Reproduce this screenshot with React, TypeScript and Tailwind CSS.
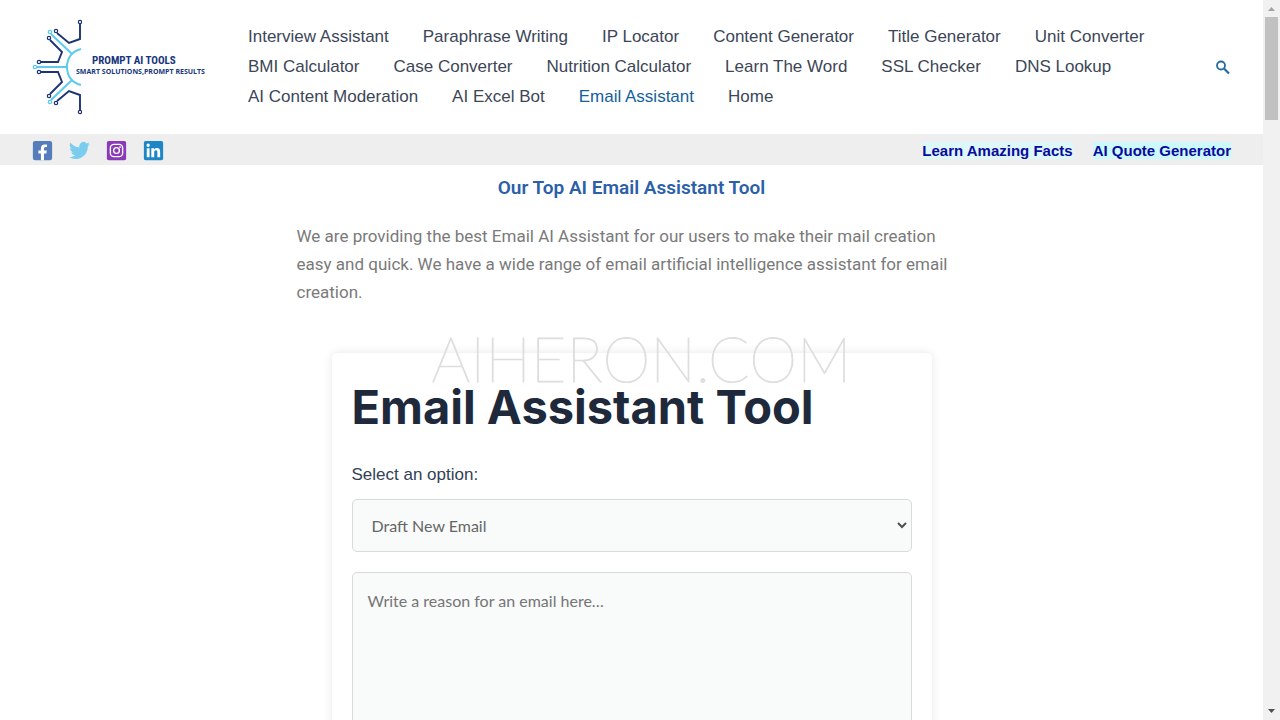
import type { ReactNode } from "react";

const links = [
  "Interview Assistant",
  "Paraphrase Writing",
  "IP Locator",
  "Content Generator",
  "Title Generator",
  "Unit Converter",
  "BMI Calculator",
  "Case Converter",
  "Nutrition Calculator",
  "Learn The Word",
  "SSL Checker",
  "DNS Lookup",
  "AI Content Moderation",
  "AI Excel Bot",
  "Email Assistant",
  "Home",
];

function CircuitMark() {
  return (
    <svg viewBox="0 0 50 98" className="h-[98px] w-[50px] shrink-0" fill="none" aria-hidden="true">
      <g stroke="#5ccbec" strokeWidth="2">
        <path d="M49 31C40 33 35 40 35 49s5 16 14 18M5 49h29M19 16l21 20M19 82l21-20" />
        <circle cx="3" cy="49" r="1.7" strokeWidth="1.300" />
        <circle cx="18" cy="14" r="1.700" strokeWidth="1.300" />
        <circle cx="18" cy="84" r="1.700" strokeWidth="1.300" />
      </g>
      <g stroke="#1c3474" strokeWidth="1.900">
        <path d="M48 6v15l-11 4L25 15M18 22l12 12-4 10H9M48 92V77l-11-4-12 10M18 76l12-12-4-10H9" />
        <g strokeWidth="1.200">
          <circle cx="48" cy="4" r="1.700" />
          <circle cx="24" cy="13" r="1.700" />
          <circle cx="17" cy="20" r="1.700" />
          <circle cx="7" cy="44" r="1.700" />
          <circle cx="7" cy="54" r="1.700" />
          <circle cx="17" cy="78" r="1.700" />
          <circle cx="24" cy="85" r="1.700" />
          <circle cx="48" cy="94" r="1.700" />
        </g>
      </g>
    </svg>
  );
}

function Logo() {
  return (
    <a href="#home" aria-label="Prompt AI Tools" className="flex w-[184px] shrink-0 items-center">
      <CircuitMark />
      <span className="-ml-1.5 flex flex-col pb-1 whitespace-nowrap text-[#17367c]">
        <span className="pl-4 font-['Liberation_Sans_Narrow','Roboto_Condensed',sans-serif] text-[11px] leading-[14px] font-bold">
          PROMPT AI TOOLS
        </span>
        <span className="font-['Open_Sans',sans-serif] text-[7px] leading-[8px] font-bold">
          SMART SOLUTIONS,PROMPT RESULTS
        </span>
      </span>
    </a>
  );
}

function Social({ label, color, children }: { label: string; color: string; children: ReactNode }) {
  return (
    <a href={"#" + label.toLowerCase()} aria-label={label} className={color}>
      <svg viewBox="0 0 24 24" className="size-[21px]" fill="currentColor" aria-hidden="true">
        {children}
      </svg>
    </a>
  );
}

function Scrollbar() {
  return (
    <div className="flex w-[17px] shrink-0 flex-col items-center bg-[#f1f1f1]" aria-hidden="true">
      <svg viewBox="0 0 17 17" className="size-[17px]">
        <path d="M5 11h7L8.500 7z" fill="#a3a3a3" />
      </svg>
      <div className="h-[103px] w-[13px] bg-[#c1c1c1]" />
      <svg viewBox="0 0 17 17" className="mt-auto size-[17px]">
        <path d="M5 6h7l-3.500 4z" fill="#505050" />
      </svg>
    </div>
  );
}

export default function App() {
  return (
    <div className="flex h-screen bg-white font-['Liberation_Sans',sans-serif] text-[#334155]">
      <div className="min-w-0 flex-1 overflow-hidden">
        <header className="flex items-center px-8 py-[18px]">
          <Logo />
          <nav aria-label="Main" className="ml-8 flex-1">
            <ul className="flex flex-wrap gap-x-[34px] py-1 text-[17px] leading-[30px]">
              {links.map((link) => (
                <li key={link}>
                  <a href="#page" className={link === "Email Assistant" ? "text-[#155f9c]" : "text-[#3c4657]"}>
                    {link}
                  </a>
                </li>
              ))}
            </ul>
          </nav>
          <button type="button" aria-label="Search" className="ml-12">
            <svg viewBox="0 0 18 18" className="size-[18px]" fill="none" stroke="#256aa8" aria-hidden="true">
              <circle cx="8" cy="7.500" r="4" strokeWidth="1.8" />
              <path d="M11 10.500l5 5" strokeWidth="2.200" />
            </svg>
          </button>
        </header>

        <div className="flex h-[31px] items-center justify-between bg-[#eeeeee] px-8">
          <div className="flex items-center gap-4 pt-0.5">
            <Social label="Facebook" color="text-[#557dbc]">
              <rect x="1" y="1" width="22" height="22" rx="2.500" />
              <path
                fill="#fff"
                d="M10.200 23v-7.600H7.300V12h2.900V9.500c0-2.900 1.700-4.500 4.300-4.500 1.300 0 2.600.2 2.600.2v2.900h-1.500c-1.400 0-1.900.9-1.900 1.800V12h3.200l-.5 3.400h-2.700V23z"
              />
            </Social>
            <Social label="Twitter" color="text-[#7acdee]">
              <path d="M24 4.600c-.9.4-1.800.7-2.800.8 1-.6 1.800-1.600 2.200-2.700-1 .6-2 1-3.100 1.200a4.900 4.900 0 0 0-8.400 4.500C7.700 8.100 4.100 6.100 1.700 3.100a4.900 4.900 0 0 0 1.500 6.600c-.8 0-1.600-.2-2.200-.6v.1c0 2.300 1.700 4.300 3.900 4.800-.7.200-1.400.2-2.200.1.600 2 2.400 3.400 4.600 3.400A9.900 9.900 0 0 1 0 19.500 13.900 13.900 0 0 0 7.500 21.700c9.100 0 14-7.500 14-14v-.6c1-.7 1.800-1.600 2.500-2.500z" />
            </Social>
            <Social label="Instagram" color="text-[#8a3ab9]">
              <rect x="1" y="1" width="22" height="22" rx="2" />
              <g fill="none" stroke="#fff" strokeWidth="1.600">
                <rect x="5" y="5" width="14" height="14" rx="4" />
                <circle cx="12" cy="12" r="3.300" />
              </g>
              <circle cx="16" cy="8" r="1" fill="#fff" />
            </Social>
            <Social label="LinkedIn" color="text-[#1c86c6]">
              <rect x="1" y="1" width="22" height="22" rx="2" />
              <path
                fill="#fff"
                d="M4.300 9.300h3.200v10.400H4.300zM5.900 4.100a1.900 1.900 0 1 1 0 3.800 1.900 1.900 0 0 1 0-3.800zM9.500 9.300h3.100v1.400c.5-.9 1.600-1.700 3.100-1.700 3.300 0 3.900 2.100 3.900 5v5.700h-3.200v-5.100c0-1.200 0-2.800-1.700-2.800s-1.900 1.300-1.900 2.700v5.200H9.500z"
              />
            </Social>
          </div>
          <div className="flex items-center gap-5 pt-0.5 text-[15px] leading-[17px] font-bold text-[#0a0a9c]">
            <a href="#facts" className="bg-[#dcf8fa]">Learn Amazing Facts</a>
            <a href="#quotes" className="bg-[#ccfafc]">AI Quote Generator</a>
          </div>
        </div>

        <main className="mx-auto flex w-full max-w-[670px] flex-col font-['Roboto',sans-serif]">
          <h1 className="mt-[9px] text-center text-[19px] leading-[28px] font-semibold text-[#2b5fa8]">
            Our Top AI Email Assistant Tool
          </h1>
          <p className="mt-5 text-[17px] leading-[28px] text-[#7a7a7a]">
            We are providing the best Email AI Assistant for our users to make their mail creation easy and quick.
            We have a wide range of email artificial intelligence assistant for email creation.
          </p>

          <section className="relative mx-auto mt-[47px] w-full max-w-[600px] rounded-[5px] bg-white p-5 shadow-[0_0_10px_rgba(0,0,0,0.1)]">
            <p className="pointer-events-none absolute -top-[31px] left-[100px] font-['Lato',sans-serif] text-[61px] leading-[74px] font-thin whitespace-nowrap text-[#dedede] [-webkit-text-stroke:1px_#dedede]">
              AIHERON.COM
            </p>
            <h2 className="relative font-['Inter',sans-serif] text-[47px] leading-[68px] font-bold whitespace-nowrap text-[#1e293b]">
              Email Assistant Tool
            </h2>
            <form onSubmit={(event) => event.preventDefault()}>
              <label
                htmlFor="mail-kind"
                className="mt-5 block font-['Liberation_Sans',sans-serif] text-[17px] leading-[28px] text-[#334155]"
              >
                Select an option:
              </label>
              <div className="relative mt-[10px]">
                <select
                  id="mail-kind"
                  className="h-[53px] w-full appearance-none rounded-[5px] border border-[#d8dadb] bg-[#f9fafa] px-[19px] font-['Lato',sans-serif] text-[16px] text-[#666666]"
                >
                  <option>Draft New Email</option>
                </select>
                <svg
                  viewBox="0 0 10 10"
                  className="pointer-events-none absolute top-[21px] right-[5px] size-[10px]"
                  fill="none"
                  stroke="#505050"
                  strokeWidth="2"
                  aria-hidden="true"
                >
                  <path d="M1 3l4 4 4-4" />
                </svg>
              </div>
              <textarea
                aria-label="Reason for the email"
                placeholder="Write a reason for an email here…"
                rows={8}
                className="mt-5 block w-full resize-none rounded-[5px] border border-[#d8dadb] bg-[#f9fafa] p-[15px] font-['Lato',sans-serif] text-[16px] leading-[26px] text-[#666666] placeholder:text-[#757575]"
              />
            </form>
          </section>
        </main>
      </div>
      <Scrollbar />
    </div>
  );
}
